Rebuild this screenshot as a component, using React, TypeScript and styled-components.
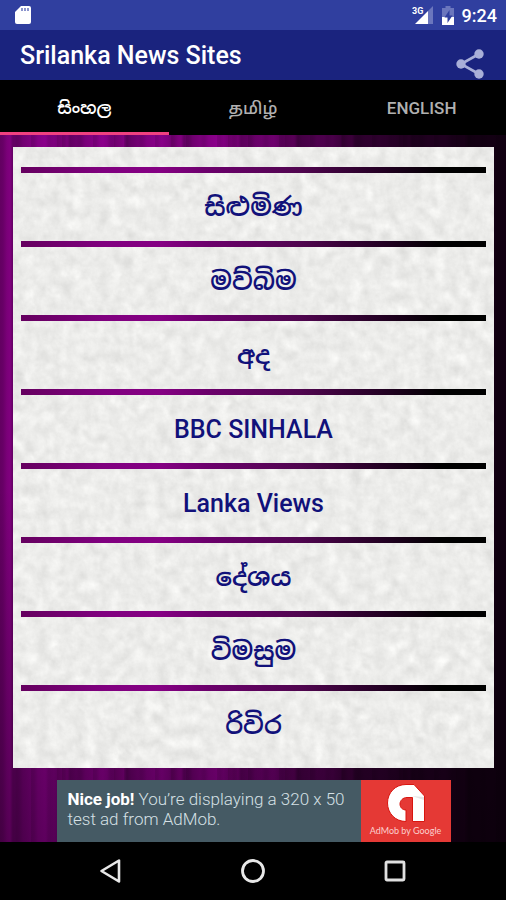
import React, { useState } from "react";
import styled, { createGlobalStyle } from "styled-components";

const GlobalStyle = createGlobalStyle`
  * { box-sizing: border-box; }
  body {
    margin: 0;
    background: #000;
    font-family: Roboto, "Noto Sans Sinhala", "Noto Sans Tamil", "Noto Sans", sans-serif;
  }
  button { font: inherit; border: 0; padding: 0; background: none; cursor: pointer; }
`;

const Screen = styled.div`
  min-height: 100vh;
  display: flex;
  flex-direction: column;
`;

const StatusBar = styled.div`
  height: 30px;
  padding: 0 9px 0 15px;
  display: flex;
  align-items: center;
  justify-content: space-between;
  background: #303f9f;
  color: #fff;
`;

const StatusIcons = styled.div`
  display: flex;
  align-items: center;
  gap: 8px;
`;

const Clock = styled.time`
  font-size: 18px;
  line-height: 30px;
  font-weight: 500;
  padding-top: 2px;
`;

const AppBar = styled.header`
  height: 50px;
  padding: 0 22px 0 20px;
  display: flex;
  justify-content: space-between;
  background: #1a237e;
`;

const Title = styled.h1`
  margin: 0;
  font-size: 25px;
  line-height: 52px;
  font-weight: 500;
  color: #fff;
`;

const ShareButton = styled.button`
  height: 30px;
  margin-top: 19px;
  color: #a9afd8;
`;

const Tabs = styled.div`
  display: grid;
  grid-template-columns: repeat(3, 1fr);
  background: #000;
`;

const Tab = styled.button<{ $active: boolean }>`
  height: 55px;
  padding-top: 3px;
  font-size: 17px;
  line-height: 24px;
  font-weight: 500;
  color: ${(p) => (p.$active ? "#fff" : "#b0b0b0")};
  border-bottom: 3px solid ${(p) => (p.$active ? "#f04080" : "#000")};

  &:lang(si) {
    font-weight: 600;
  }
`;

const curtain = `
  linear-gradient(90deg, rgba(0,0,0,0) 0%, rgba(0,0,0,0) 44%, rgba(0,0,0,0.68) 76%, rgba(0,0,0,0.88) 100%),
  linear-gradient(180deg, rgba(0,0,0,0) 0%, rgba(0,0,0,0) 50%, rgba(0,0,0,0.32) 100%),
  repeating-linear-gradient(90deg, rgba(0,0,0,0.1) 0 3px, rgba(0,0,0,0) 7px 14px, rgba(0,0,0,0.08) 17px 19px, rgba(0,0,0,0) 23px 31px),
  repeating-linear-gradient(90deg, #6e006c 0px, #80007e 10px, #620062 13px, #7c007c 30px, #8b008b 46px, #780078 57px)
`;

const Main = styled.main`
  flex: 1;
  padding: 12px 12px 0 13px;
  background: ${curtain};
`;

const Sheet = styled.section`
  position: relative;
  padding: 20px 8px 9px;
  background: #ebebe9;
`;

const Paper = styled.svg`
  position: absolute;
  inset: 0;
  width: 100%;
  height: 100%;
`;

const SiteList = styled.ul`
  position: relative;
  margin: 0;
  padding: 0;
  list-style: none;
`;

const SiteRow = styled.li`
  border-top: 6px solid;
  border-image: linear-gradient(90deg, #65005f, #80007f 18%, #850083 30%, #6c006c 40%, #50054f 60%, #220022 78%, #000 90%) 1;
`;

const SiteLink = styled.a`
  display: block;
  height: 68px;
  padding-top: 1px;
  font-size: 25px;
  line-height: 68px;
  font-weight: 500;
  text-align: center;
  text-decoration: none;
  color: #11117a;

  &:lang(si) {
    font-weight: 600;
  }
`;

const AdSlot = styled.div`
  display: flex;
  justify-content: center;
  padding-top: 12px;
`;

const Ad = styled.a`
  display: flex;
  height: 62px;
  text-decoration: none;
`;

const AdText = styled.p`
  margin: 0;
  width: 304px;
  padding: 9px 0 0 11px;
  font-size: 17px;
  line-height: 20px;
  font-weight: 300;
  white-space: nowrap;
  color: #d5e0e5;
  background: #455a64;
`;

const AdStrong = styled.strong`
  font-weight: 700;
  color: #fff;
`;

const AdBrand = styled.div`
  width: 90px;
  padding-top: 3px;
  display: flex;
  flex-direction: column;
  align-items: center;
  background: #e53935;
  color: #fbd0ce;
  font-family: Lato, sans-serif;
  font-size: 9px;
  line-height: 16px;
  white-space: nowrap;
`;

const NavBar = styled.nav`
  height: 58px;
  padding: 0 40px;
  display: grid;
  grid-template-columns: repeat(3, 1fr);
  background: #000;
`;

const NavButton = styled.button`
  display: flex;
  align-items: center;
  justify-content: center;
`;

const languages = [
  { name: "සිංහල", lang: "si" },
  { name: "தமிழ்", lang: "ta" },
  { name: "ENGLISH", lang: "en" },
];

const sites = [
  { name: "සිළුමිණ", lang: "si" },
  { name: "මව්බිම", lang: "si" },
  { name: "අද", lang: "si" },
  { name: "BBC SINHALA", lang: "en" },
  { name: "Lanka Views", lang: "en" },
  { name: "දේශය", lang: "si" },
  { name: "විමසුම", lang: "si" },
  { name: "රිවිර", lang: "si" },
];

const MemoryCardIcon = () => (
  <svg width="18" height="20" viewBox="0 0 18 20" aria-hidden="true">
    <path d="M6 1h8q2 0 2 2v14q0 2-2 2H2q-2 0-2-2V7z" fill="#fff" />
    <path d="M7 3v3M10 3v3M13 3v3" stroke="#6672bd" strokeWidth="1.5" />
  </svg>
);

const SignalIcon = () => (
  <svg width="22" height="20" viewBox="0 0 22 20" aria-label="3G signal">
    <path d="M3 19 16 6v13z" fill="#fff" />
    <path d="M16 6l5-5v18h-5z" fill="#6b76bd" />
    <text x="0" y="9" fill="#fff" fontSize="9" fontWeight="700">3G</text>
  </svg>
);

const BatteryIcon = () => (
  <svg width="12" height="19" viewBox="0 0 12 19" aria-label="Battery charging">
    <path d="M3.5 0h5v2H12v17H0V2h3.5z" fill="#6b76bd" />
    <path d="M0 11h12v8H0z" fill="#fff" />
    <path d="M7.5 4 2.5 11.5h3V17l5-7.500h-3z" fill="#303f9f" />
  </svg>
);

const ShareIcon = () => (
  <svg width="28" height="30" viewBox="0 0 28 30" aria-hidden="true">
    <path d="M23 5 5 15l18 10" fill="none" stroke="currentColor" strokeWidth="2.6" />
    <g fill="currentColor">
      <circle cx="23" cy="5" r="4.700" />
      <circle cx="5" cy="15" r="4.700" />
      <circle cx="23" cy="25" r="4.700" />
    </g>
  </svg>
);

const AdMobLogo = () => (
  <svg width="40" height="40" viewBox="0 0 40 40" aria-hidden="true">
    <path
      d="M20 38.500C9 38.500 1.500 30 1.500 20S9 1.500 20 1.500h8L38.500 13v25.500H26.500V14.500H21c-4 0-7 3-7 6.500s2.500 6 6 6z"
      fill="#fff"
      stroke="#d9150f"
      strokeWidth="1"
    />
    <path d="m26 13 12 1v3z" fill="#e6e6e6" />
  </svg>
);

const PaperTexture = () => (
  <Paper aria-hidden="true">
    <filter id="grain" x="0" y="0" width="100%" height="100%" colorInterpolationFilters="sRGB">
      <feTurbulence type="fractalNoise" baseFrequency="0.083" numOctaves="5" seed="23" />
      <feColorMatrix values="0.09 0.07 0.05 0 0.820  0.09 0.07 0.05 0 0.820  0.09 0.07 0.05 0 0.812  0 0 0 0 1" />
    </filter>
    <rect width="100%" height="100%" filter="url(#grain)" />
  </Paper>
);

export default function App() {
  const [active, setActive] = useState(0);

  return (
    <Screen>
      <GlobalStyle />
      <StatusBar>
        <MemoryCardIcon />
        <StatusIcons>
          <SignalIcon />
          <BatteryIcon />
          <Clock>9:24</Clock>
        </StatusIcons>
      </StatusBar>
      <AppBar>
        <Title>Srilanka News Sites</Title>
        <ShareButton aria-label="Share">
          <ShareIcon />
        </ShareButton>
      </AppBar>
      <Tabs role="tablist">
        {languages.map(({ name, lang }, i) => (
          <Tab
            key={lang}
            lang={lang}
            role="tab"
            aria-selected={i === active}
            $active={i === active}
            onClick={() => setActive(i)}
          >
            {name}
          </Tab>
        ))}
      </Tabs>
      <Main>
        <Sheet>
          <PaperTexture />
          <SiteList>
            {sites.map((site) => (
              <SiteRow key={site.name}>
                <SiteLink href="#" lang={site.lang}>{site.name}</SiteLink>
              </SiteRow>
            ))}
          </SiteList>
        </Sheet>
        <AdSlot>
          <Ad href="#">
            <AdText>
              <AdStrong>Nice job!</AdStrong> You’re displaying a 320 x 50
              <br />
              test ad from AdMob.
            </AdText>
            <AdBrand>
              <AdMobLogo />
              <span>AdMob by Google</span>
            </AdBrand>
          </Ad>
        </AdSlot>
      </Main>
      <NavBar>
        <NavButton aria-label="Back">
          <svg width="24" height="26" viewBox="0 0 24 26">
            <path d="M20 2.500v21L2.500 13z" fill="none" stroke="#e8e8e8" strokeWidth="2.600" strokeLinejoin="round" />
          </svg>
        </NavButton>
        <NavButton aria-label="Home">
          <svg width="26" height="26" viewBox="0 0 26 26">
            <circle cx="13" cy="13" r="10.500" fill="none" stroke="#e8e8e8" strokeWidth="2.800" />
          </svg>
        </NavButton>
        <NavButton aria-label="Recent apps">
          <svg width="22" height="22" viewBox="0 0 22 22">
            <rect x="2" y="2" width="18" height="18" rx="1" fill="none" stroke="#e0e0e0" strokeWidth="2.800" />
          </svg>
        </NavButton>
      </NavBar>
    </Screen>
  );
}
